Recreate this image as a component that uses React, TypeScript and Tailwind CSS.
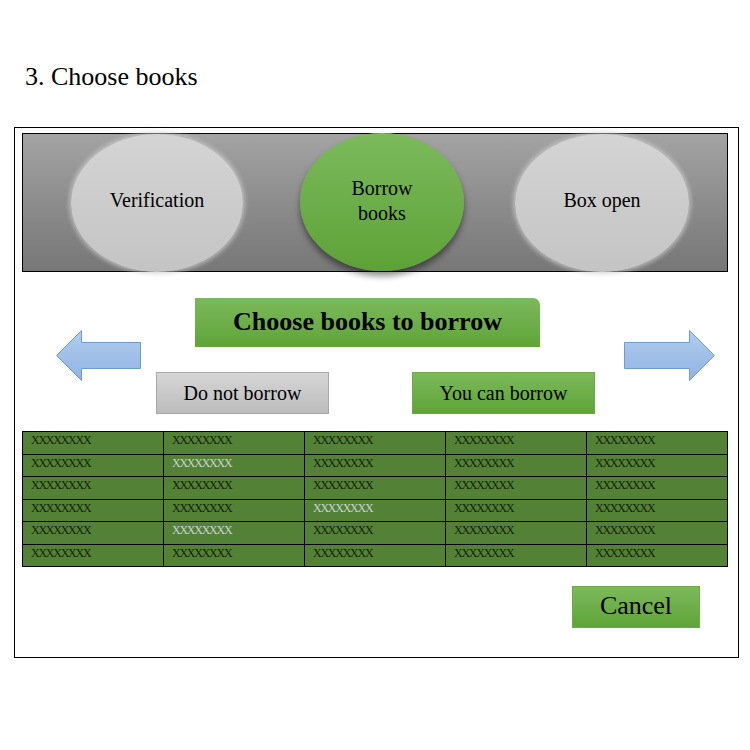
import React from "react";

const SERIF = { fontFamily: '"Liberation Serif"' };

// cells whose text is drawn light (row, col)
const LIGHT = new Set(["1-1", "3-2", "4-1"]);

function Arrow({ dir }: { dir: "left" | "right" }) {
  const w = dir === "left" ? 85 : 91;
  const pts =
    dir === "left"
      ? "0.5,25.5 25.5,0.5 25.5,12.5 84.5,12.5 84.5,38.5 25.5,38.5 25.5,50.5"
      : "90.5,25.5 65.5,0.5 65.5,12.5 0.5,12.5 0.5,38.5 65.5,38.5 65.5,50.5";
  const id = `arrowFill-${dir}`;
  return (
    <svg width={w} height={51} viewBox={`0 0 ${w} 51`} className="block">
      <defs>
        <linearGradient id={id} x1="0" y1="0" x2="0" y2="1">
          <stop offset="0" stopColor="#b3cdee" />
          <stop offset="1" stopColor="#8fb3e2" />
        </linearGradient>
      </defs>
      <polygon points={pts} fill={`url(#${id})`} stroke="#6d9bd6" strokeWidth="1" />
    </svg>
  );
}

function Step({
  label,
  active,
  className,
}: {
  label: React.ReactNode;
  active?: boolean;
  className: string;
}) {
  return (
    <div
      style={SERIF}
      className={
        "flex h-[138px] shrink-0 items-center justify-center rounded-[50%] text-center text-[20px] leading-[25px] text-black " +
        (active
          ? "bg-gradient-to-b from-[#7cba5c] to-[#5da236] pb-[2px] shadow-[0_5px_6px_rgba(0,0,0,0.45)]"
          : "bg-gradient-to-b from-[#d4d4d4] to-[#c4c4c4] pb-[6px] shadow-[0_0_4px_2px_rgba(205,205,205,0.7)]") +
        " " +
        className
      }
    >
      {label}
    </div>
  );
}

export default function App() {
  const rows = Array.from({ length: 6 });
  const cols = Array.from({ length: 5 });

  return (
    <div className="h-[750px] w-[750px] overflow-hidden bg-white" style={SERIF}>
      <div className="pl-[25px] pt-[62px] text-[26px] leading-[30px] text-black" style={SERIF}>
        3. Choose books
      </div>

      <div className="ml-[14px] mt-[35px] h-[531px] w-[725px] border border-black pl-[7px] pr-[10px] pt-[5px]">
        {/* progress banner */}
        <div className="flex h-[139px] items-start border border-black bg-gradient-to-b from-[#a3a3a3] to-[#777777]">
          <Step label="Verification" className="ml-[48px] w-[172px]" />
          <Step
            active
            label={
              <span>
                Borrow
                <br />
                books
              </span>
            }
            className="-mt-px ml-[57px] w-[164px]"
          />
          <Step label="Box open" className="ml-[51px] w-[174px]" />
        </div>

        {/* choose header + actions */}
        <div className="mt-[26px] flex items-start">
          <div className="ml-[34px] mt-[32px]">
            <Arrow dir="left" />
          </div>
          <div className="ml-[15px] w-[439px]">
            <div
              style={SERIF}
              className="ml-[39px] flex h-[49px] w-[345px] items-center justify-center rounded-tr-[7px] bg-gradient-to-b from-[#7cb95b] to-[#5fa437] pb-[2px] text-[26px] font-bold text-black"
            >
              Choose books to borrow
            </div>
            <div className="mt-[25px] flex">
              <div
                style={SERIF}
                className="flex h-[42px] w-[173px] items-center justify-center border border-[#a8a8a8] bg-gradient-to-b from-[#d6d6d6] to-[#bcbcbc] pb-[1px] text-[20px] text-black"
              >
                Do not borrow
              </div>
              <div
                style={SERIF}
                className="ml-[83px] flex h-[42px] w-[183px] items-center justify-center border border-[#6aab45] bg-gradient-to-b from-[#7cb95b] to-[#5fa437] pb-[1px] text-[20px] text-black"
              >
                You can borrow
              </div>
            </div>
          </div>
          <div className="ml-[29px] mt-[32px]">
            <Arrow dir="right" />
          </div>
        </div>

        {/* book grid */}
        <div className="mt-[17px] grid h-[136px] grid-cols-5 grid-rows-6 border-l border-t border-black bg-[#538135]">
          {rows.map((_, r) =>
            cols.map((_, c) => (
              <div
                key={`${r}-${c}`}
                style={SERIF}
                className={
                  "border-b border-r border-black pl-[8px] text-[12px] leading-[16px] tracking-[-1.25px] " +
                  (LIGHT.has(`${r}-${c}`) ? "text-[#c8d4d6]" : "text-[#14220c]")
                }
              >
                XXXXXXXX
              </div>
            ))
          )}
        </div>

        <div className="mt-[19px] flex justify-end pr-[28px]">
          <div
            style={SERIF}
            className="flex h-[42px] w-[128px] items-center justify-center border border-[#6aab45] bg-gradient-to-b from-[#7cb95b] to-[#5fa437] pb-[3px] text-[26px] text-black"
          >
            Cancel
          </div>
        </div>
      </div>
    </div>
  );
}
